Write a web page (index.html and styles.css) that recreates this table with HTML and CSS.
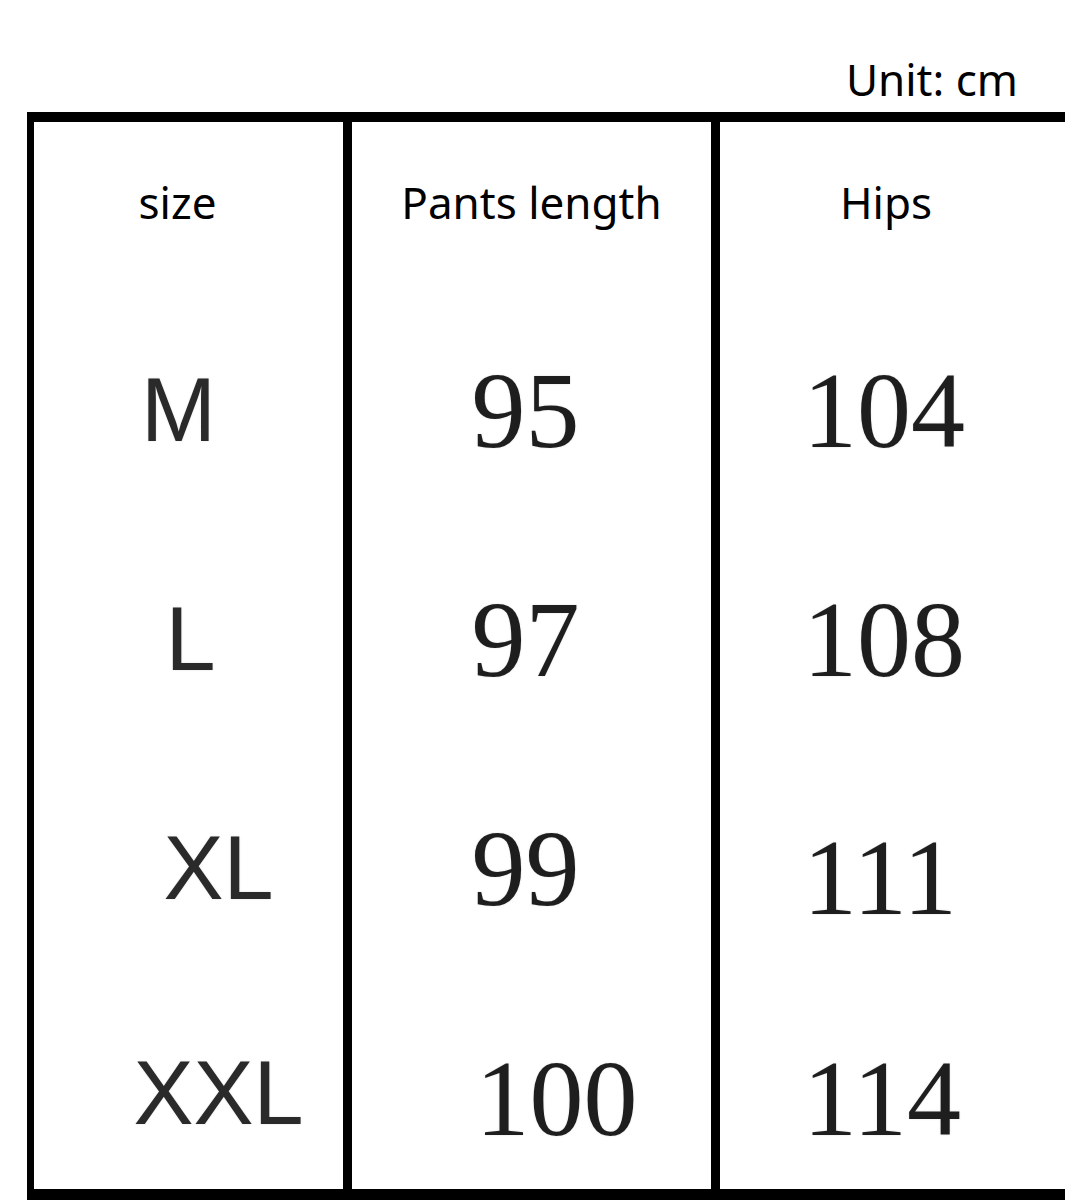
FILE: index.html
```html
<!DOCTYPE html>
<html>
<head>
<meta charset="utf-8">
<link rel="stylesheet" href="styles.css">
</head>
<body>
<div class="page">
  <div class="unit">Unit: cm</div>
  <div class="table">
    <div class="cell c1 head">size</div>
    <div class="cell c2 head">Pants length</div>
    <div class="cell c3 head">Hips</div>

    <div class="cell c1 row letter">M</div>
    <div class="cell c2 row num">95</div>
    <div class="cell c3 row num">104</div>

    <div class="cell c1 row letter ltr-l">L</div>
    <div class="cell c2 row num">97</div>
    <div class="cell c3 row num">108</div>

    <div class="cell c1 row letter shift">XL</div>
    <div class="cell c2 row num">99</div>
    <div class="cell c3 row num low">111</div>

    <div class="cell c1 row last letter shift">XXL</div>
    <div class="cell c2 row last num shift lastnum">100</div>
    <div class="cell c3 row last num lastnum">114</div>
  </div>
</div>
</body>
</html>
```

FILE: styles.css
```css
html, body {
  margin: 0;
  padding: 0;
  background: #fff;
  overflow: hidden;
}
.page {
  width: 1065px;
  height: 1200px;
  overflow: hidden;
}
.unit {
  height: 112px;
  box-sizing: border-box;
  padding: 50px 47px 0 0;
  text-align: right;
  font-family: "Noto Sans", sans-serif;
  font-size: 44px;
  line-height: 58px;
  color: #000;
}
.table {
  margin-left: 27px;
  width: 1100px;
  border-top: 10px solid #000;
  border-left: 7px solid #000;
  border-bottom: 11px solid #000;
  display: grid;
  grid-template-columns: 318px 368px 414px;
  grid-template-rows: 174px 229px 229px 229px 206px;
}
.cell {
  box-sizing: border-box;
  display: flex;
  align-items: center;
  justify-content: center;
}
.c1, .c2 {
  border-right: 9px solid #000;
}
.c3 {
  justify-content: flex-start;
  padding-left: 83px;
}
.head {
  font-family: "Noto Sans", sans-serif;
  font-size: 44px;
  color: #000;
  padding-bottom: 14px;
}
.c1.head {
  padding-right: 22px;
}
.c3.head {
  padding-left: 120px;
}
.letter {
  font-family: "Liberation Sans", Arial, sans-serif;
  font-size: 90px;
  color: #2a2a2a;
  padding-right: 20px;
  text-shadow: 0 0 2px rgba(0,0,0,0.15);
}
.num {
  font-family: "Liberation Serif", "Times New Roman", serif;
  font-size: 108px;
  color: #1e1e1e;
  padding-right: 12px;
  text-shadow: 0 0 2px rgba(0,0,0,0.15);
}
.c3.num {
  padding-right: 0;
}
.ltr-l {
  padding-right: 0;
  padding-left: 4px;
}
.shift {
  padding-left: 60px;
  padding-right: 0;
}
.c2.shift {
  padding-left: 50px;
}
.low {
  padding-top: 18px;
}
.last {
  padding-top: 14px;
}
.lastnum {
  padding-top: 26px;
}
```
